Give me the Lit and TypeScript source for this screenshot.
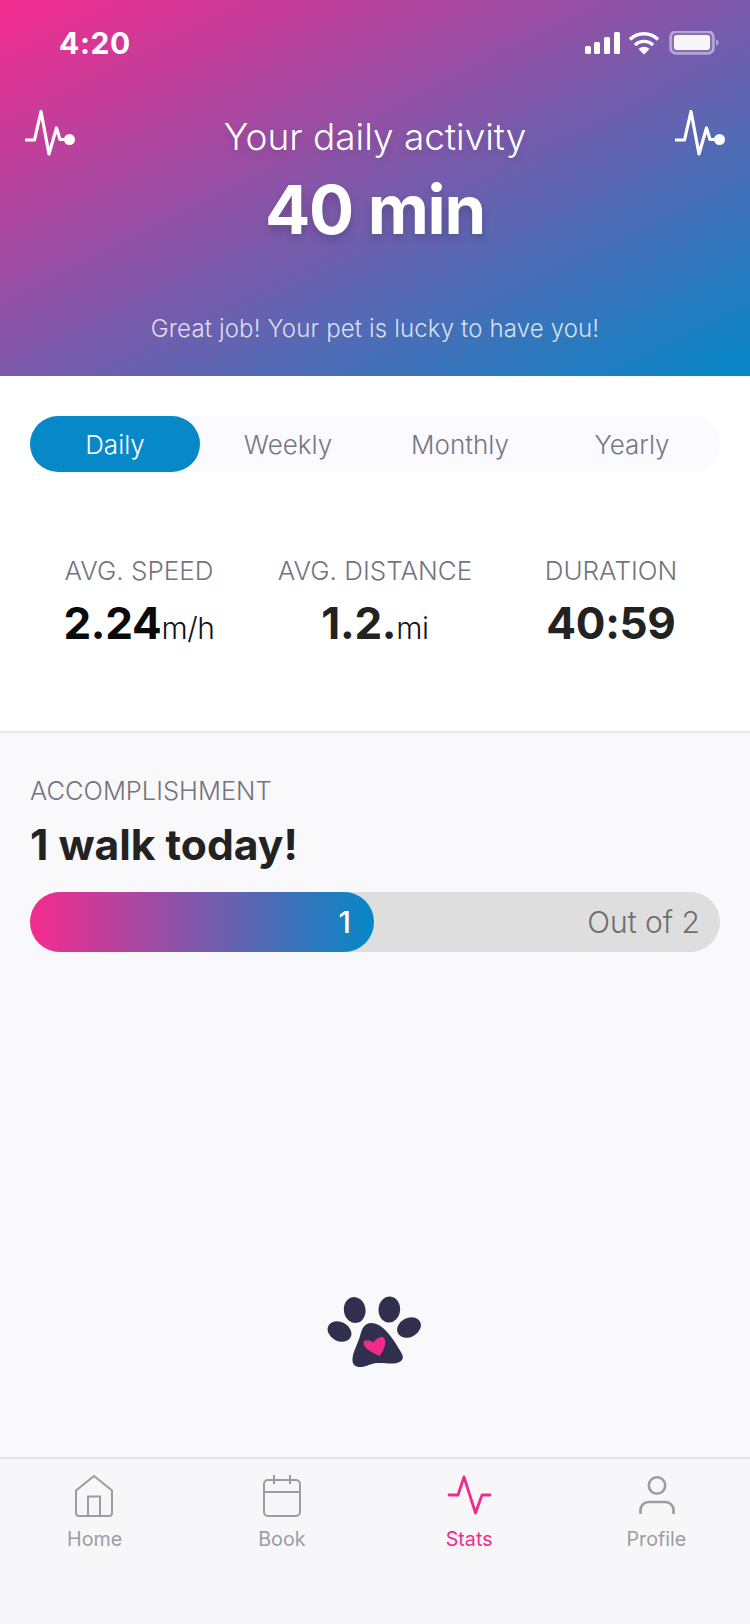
import { LitElement, html, css, svg } from "lit";
import { customElement } from "lit/decorators.js";

const pulse = svg`<path d="M1 32H9.5L16 3.5 24 46 31.5 20 35 31.5 44 31.5" fill="none" stroke="#fff" stroke-width="3.2" stroke-linecap="round" stroke-linejoin="round"/><circle cx="44.5" cy="31.5" r="5.5" fill="#fff"/>`;

@customElement("app-root")
export class AppRoot extends LitElement {
  static styles = css`
    :host { display: block; width: 750px; height: 1624px; font-family: Inter, "Noto Sans", sans-serif; overflow: hidden; }
    .page { height: 1624px; display: flex; flex-direction: column; background: #fff; }
    .hero { height: 376px; box-sizing: border-box; background: linear-gradient(to bottom right, #f42b8e, #0488c7); color: #fff; }
    .status { height: 108px; box-sizing: border-box; padding: 27px 30px 0 59px; display: flex; justify-content: space-between; align-items: flex-start; }
    .time { font-size: 30px; line-height: 32px; font-weight: 700; letter-spacing: 0.6px; }
    .status svg { display: block; margin-top: 4px; }
    .hero-row { display: flex; justify-content: space-between; padding: 0 25px; }
    .pulse { width: 50px; height: 50px; display: block; }
    .hero-text { text-align: center; flex: 1; }
    .hero-title { font-size: 37px; line-height: 44px; margin-top: 7px; font-weight: 300; text-shadow: 0 4px 8px rgba(0,0,0,.12); }
    .hero-num { font-size: 67px; line-height: 82px; margin-top: 10px; font-weight: 700; letter-spacing: -1.2px; text-shadow: 0 5px 10px rgba(0,0,0,.18); }
    .hero-sub { text-align: center; font-size: 24px; line-height: 30px; margin-top: 63px; font-weight: 300; letter-spacing: 0.15px; color: rgba(255,255,255,.8); }
    .tabs { margin: 40px 30px 0; height: 56px; box-sizing: border-box; padding: 1px 2px 0 0; border-radius: 28px; background: #fafaff; display: grid; grid-template-columns: repeat(4, 1fr); }
    .tab { display: flex; align-items: center; justify-content: center; font-size: 26px; font-weight: 300; color: #77777f; border-radius: 28px; }
    .tab.on { background: #0688c9; color: #fff; width: 170px; margin-top: -1px; }
    .stats { display: grid; grid-template-columns: repeat(3, 236px); padding: 84px 21px 0; height: 259px; box-sizing: border-box; text-align: center; }
    .label { font-size: 26px; line-height: 30px; font-weight: 300; color: #74747e; white-space: nowrap; }
    .val { font-size: 44px; line-height: 54px; font-weight: 700; color: #222; margin-top: 10px; letter-spacing: -0.3px; white-space: nowrap; }
    .val.first { color: #0a0a0a; }
    .unit { font-size: 30px; font-weight: 300; color: #111; letter-spacing: -0.4px; }
    .section { flex: 1; background: #f9f9fb; border-top: 2px solid #e6e6ec; padding: 43px 30px 0; display: flex; flex-direction: column; }
    .section .label { font-size: 25.5px; }
    .headline { font-size: 42.6px; line-height: 52px; font-weight: 700; color: #222; margin-top: 13px; }
    .bar { margin-top: 21px; height: 60px; border-radius: 30px; background: #dedede; display: flex; justify-content: space-between; align-items: center; font-size: 30px; font-weight: 300; color: #6e6e6e; padding-right: 20px; }
    .fill { width: 344px; height: 60px; box-sizing: border-box; border-radius: 30px; background: linear-gradient(to right, #f42b8e, #0488c7); color: #fff; font-weight: 500; display: flex; align-items: center; justify-content: flex-end; padding-right: 23px; }
    .paw { align-self: center; margin-top: 328px; display: block; width: 130px; height: 100px; }
    .nav { height: 167px; box-sizing: border-box; padding-left: 1px; background: #f7f7fa; border-top: 2px solid #e2e2e9; display: grid; grid-template-columns: repeat(4, 1fr); }
    .item { display: flex; flex-direction: column; align-items: center; padding-top: 15px; font-size: 19.7px; line-height: 26px; color: #9c9ca5; }
    .item svg { display: block; width: 50px; height: 46px; margin-bottom: 6px; }
    .item.on { color: #f22a8c; }
  `;

  render() {
    return html`<div class="page">
      <div class="hero">
        <div class="status">
          <div class="time">4:20</div>
          <svg width="135" height="26" viewBox="0 0 135 26">
            <g fill="#fff"><rect x="0" y="15" width="6" height="8" rx="1.5"/><rect x="9" y="11" width="6" height="12" rx="1.5"/><rect x="19" y="6" width="6" height="17" rx="1.5"/><rect x="29" y="1" width="6" height="22" rx="1.5"/></g>
            <g fill="none" stroke="#fff" stroke-width="3.4"><path d="M45 8.5a20 20 0 0 1 28 0"/><path d="M50 14a13 13 0 0 1 18 0"/></g>
            <path d="M53.5 18a8 8 0 0 1 11 0L59 23.5z" fill="#fff"/>
            <rect x="85.5" y="0.5" width="43" height="22" rx="5.5" fill="rgba(255,255,255,.12)" stroke="rgba(255,255,255,.45)" stroke-width="2.6"/>
            <rect x="89" y="4" width="36" height="15" rx="3" fill="#f6f6f9"/>
            <path d="M131 8.5c2 .5 2.6 1.600 2.600 3s-.6 2.500-2.600 3z" fill="rgba(255,255,255,.45)"/>
          </svg>
        </div>
        <div class="hero-row">
          <svg class="pulse" viewBox="0 0 50 50">${pulse}</svg>
          <div class="hero-text">
            <div class="hero-title">Your daily activity</div>
            <div class="hero-num">40 min</div>
          </div>
          <svg class="pulse" viewBox="0 0 50 50">${pulse}</svg>
        </div>
        <div class="hero-sub">Great job! Your pet is lucky to have you!</div>
      </div>
      <div class="tabs">
        <div class="tab on">Daily</div><div class="tab">Weekly</div><div class="tab">Monthly</div><div class="tab">Yearly</div>
      </div>
      <div class="stats">
        <div><div class="label">AVG. SPEED</div><div class="val first">2.24<span class="unit">m/h</span></div></div>
        <div><div class="label">AVG. DISTANCE</div><div class="val">1.2.<span class="unit">mi</span></div></div>
        <div><div class="label">DURATION</div><div class="val">40:59</div></div>
      </div>
      <div class="section">
        <div class="label">ACCOMPLISHMENT</div>
        <div class="headline">1 walk today!</div>
        <div class="bar"><div class="fill">1</div><div>Out of 2</div></div>
        <svg class="paw" viewBox="0 0 130 100">
          <g fill="#30304e">
            <ellipse cx="29.500" cy="51.500" rx="12.500" ry="9.500" transform="rotate(28 29.500 51.500)"/>
            <ellipse cx="44.700" cy="30" rx="10.800" ry="13" transform="rotate(-10 44.700 30)"/>
            <ellipse cx="79.300" cy="29.500" rx="10.800" ry="13" transform="rotate(4 79.300 29.500)"/>
            <ellipse cx="99" cy="47.500" rx="12.500" ry="9.500" transform="rotate(-28 99 47.500)"/>
            <path d="M61 43C55 43 52 48 50 56C47.500 65 42 73 42.500 81C43 86 47 87.500 52 87C58 86 61 83.500 67 83C74 82.500 81 84.500 87 83C92.500 81.500 94 78 92 74C87 65 81 55 73 48C69 44.500 65 43 61 43Z"/>
          </g>
          <path d="M53.500 62.500C54 59.500 59 59.500 63.500 62.500C66 59 70.500 56 73.500 57.500C76 59 75.500 64 74 68C73 71 71.500 73.500 69.500 76C65.500 74.500 60 71.500 56.500 68.500C54.500 66.500 53.500 64.500 53.500 62.500Z" fill="#f22a8c"/>
        </svg>
      </div>
      <div class="nav">
        <div class="item"><svg viewBox="0 0 50 46" fill="none" stroke="#9c9ca5" stroke-width="2"><path d="M24 2L42 16.500V39a3 3 0 0 1-3 3H9a3 3 0 0 1-3-3V16.500Z" stroke-linejoin="round"/><path d="M18 42V22.500H30V42"/></svg>Home</div>
        <div class="item"><svg viewBox="0 0 50 46" fill="none" stroke="#9c9ca5" stroke-width="2"><rect x="7" y="6" width="36" height="36" rx="4"/><path d="M7 18H43M17 1V10M33 1V10"/></svg>Book</div>
        <div class="item on"><svg viewBox="0 0 50 46" fill="none" stroke="#f22a8c" stroke-width="2.800" stroke-linejoin="round" stroke-linecap="round"><path d="M5 21H14L20 3 31.500 39 38 21H46"/></svg>Stats</div>
        <div class="item"><svg viewBox="0 0 50 46" fill="none" stroke="#9c9ca5" stroke-width="2.600"><circle cx="26" cy="11.500" r="8.200"/><path d="M9.500 40V36a8 8 0 0 1 8-8H34.500a8 8 0 0 1 8 8V40"/></svg>Profile</div>
      </div>
    </div>`;
  }
}
